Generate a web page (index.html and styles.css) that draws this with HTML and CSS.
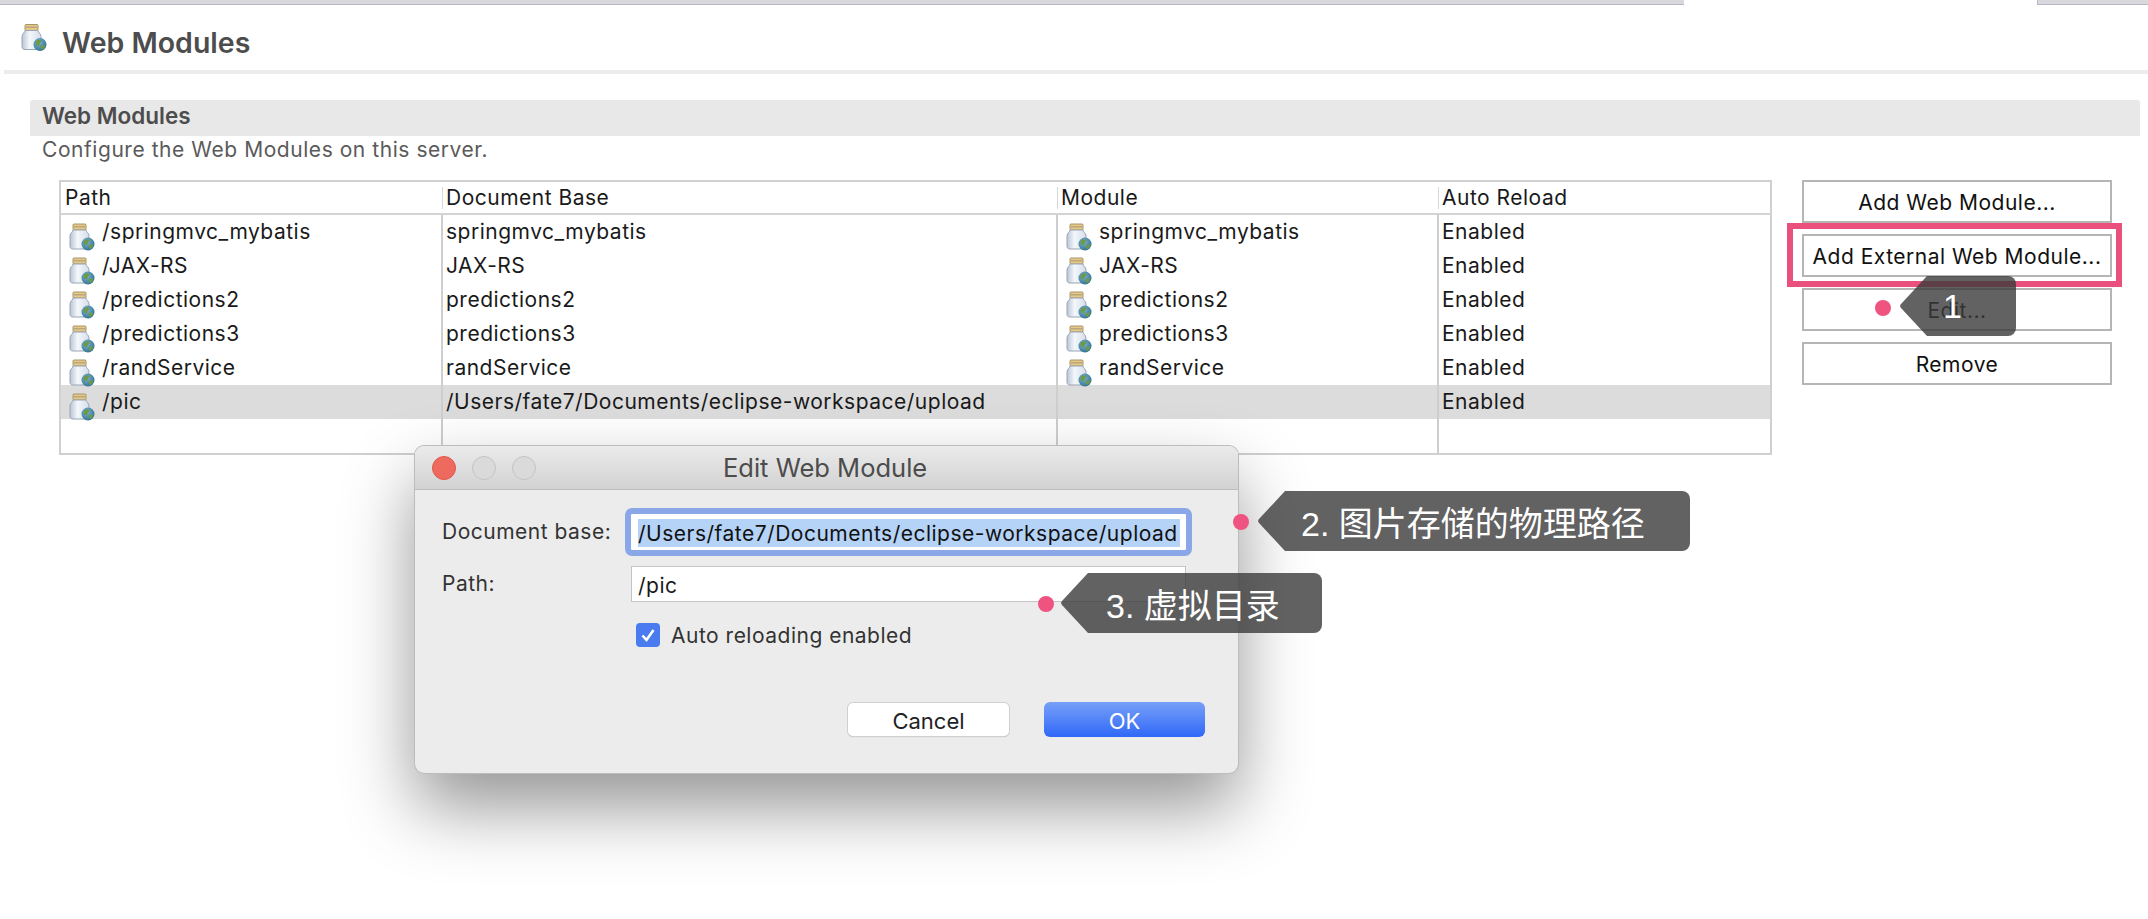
FILE: index.html

```html
<!DOCTYPE html>
<html lang="en">
<head>
    <meta charset="UTF-8">
    <meta name="viewport" content="width=device-width, initial-scale=1.0">
    <title>Web Modules</title>
    <link rel="stylesheet" href="styles.css">
</head>
<body>
    <svg class="defs" width="0" height="0">
        <defs>
            <linearGradient id="jarGlass" x1="0" y1="0" x2="1" y2="0">
                <stop offset="0" stop-color="#b9c6d6"/>
                <stop offset="0.4" stop-color="#f4f7fb"/>
                <stop offset="1" stop-color="#d5deea"/>
            </linearGradient>
            <radialGradient id="jarGlobe" cx="0.4" cy="0.35" r="0.7">
                <stop offset="0" stop-color="#7fb6d8"/>
                <stop offset="1" stop-color="#2f6f8f"/>
            </radialGradient>
            <symbol id="jar" viewBox="0 0 27 28">
                <rect x="5" y="1" width="13" height="6" rx="1" fill="#e6c987" stroke="#a8946a"/>
                <rect x="6" y="3" width="11" height="1.5" fill="#b9a77d"/>
                <path d="M5 7h13c0 2 3 3 3 6v10c0 2-1 3-3 3H5c-2 0-3-1-3-3V13c0-3 3-4 3-6z" fill="url(#jarGlass)" stroke="#9aa6b4"/>
                <circle cx="20" cy="21" r="6.5" fill="url(#jarGlobe)"/>
                <path d="M16.5 17c2-1 4-1 5 0 0 2-2 2-2 4s-3 1-4 0c0-2 0-3 1-4zM21 22c2-1 4-1 4 0 0 2-2 4-3 4-1-1-2-3-1-4z" fill="#6d9a4a"/>
            </symbol>
        </defs>
    </svg>

    <div class="top-tabs">
        <div class="tab-rest"></div>
        <div class="tab-active"></div>
        <div class="tab-rest tab-end"></div>
    </div>

    <header class="page-head">
        <svg class="head-icon"><use href="#jar"/></svg>
        <h1>Web Modules</h1>
    </header>

    <section class="modules">
        <h2>Web Modules</h2>
        <p class="desc">Configure the Web Modules on this server.</p>
        <div class="modules-body">
            <table class="grid">
                <colgroup>
                    <col class="c-path"><col class="c-base"><col class="c-module"><col>
                </colgroup>
                <thead>
                    <tr><th>Path</th><th>Document Base</th><th>Module</th><th>Auto Reload</th></tr>
                </thead>
                <tbody>
                    <tr>
                        <td><svg class="jar"><use href="#jar"/></svg>/springmvc_mybatis</td>
                        <td>springmvc_mybatis</td>
                        <td><svg class="jar"><use href="#jar"/></svg>springmvc_mybatis</td>
                        <td>Enabled</td>
                    </tr>
                    <tr>
                        <td><svg class="jar"><use href="#jar"/></svg>/JAX-RS</td>
                        <td>JAX-RS</td>
                        <td><svg class="jar"><use href="#jar"/></svg>JAX-RS</td>
                        <td>Enabled</td>
                    </tr>
                    <tr>
                        <td><svg class="jar"><use href="#jar"/></svg>/predictions2</td>
                        <td>predictions2</td>
                        <td><svg class="jar"><use href="#jar"/></svg>predictions2</td>
                        <td>Enabled</td>
                    </tr>
                    <tr>
                        <td><svg class="jar"><use href="#jar"/></svg>/predictions3</td>
                        <td>predictions3</td>
                        <td><svg class="jar"><use href="#jar"/></svg>predictions3</td>
                        <td>Enabled</td>
                    </tr>
                    <tr>
                        <td><svg class="jar"><use href="#jar"/></svg>/randService</td>
                        <td>randService</td>
                        <td><svg class="jar"><use href="#jar"/></svg>randService</td>
                        <td>Enabled</td>
                    </tr>
                    <tr class="selected">
                        <td><svg class="jar"><use href="#jar"/></svg>/pic</td>
                        <td>/Users/fate7/Documents/eclipse-workspace/upload</td>
                        <td></td>
                        <td>Enabled</td>
                    </tr>
                    <tr class="empty"><td></td><td></td><td></td><td></td></tr>
                </tbody>
            </table>
            <div class="side-buttons">
                <button type="button">Add Web Module...</button>
                <button type="button">Add External Web Module...</button>
                <button type="button">Edit...</button>
                <button type="button">Remove</button>
            </div>
        </div>
    </section>

    <!-- dialog and annotations sit over the page -->
    <div class="dialog">
        <div class="titlebar">
            <span class="light light-red"></span>
            <span class="light"></span>
            <span class="light"></span>
            <span class="dialog-title">Edit Web Module</span>
        </div>
        <div class="dialog-body">
            <div class="field">
                <label>Document base:</label>
                <div class="input input-focus"><span class="sel">/Users/fate7/Documents/eclipse-workspace/upload</span></div>
            </div>
            <div class="field field-path">
                <label>Path:</label>
                <div class="input">/pic</div>
            </div>
            <div class="check-row">
                <span class="checkbox">
                    <svg width="24" height="24" viewBox="0 0 24 24"><path d="M6.5 12.5l4 4.5 7-10" fill="none" stroke="#fff" stroke-width="2.6"/></svg>
                </span>
                <span>Auto reloading enabled</span>
            </div>
            <div class="dialog-actions">
                <button type="button" class="btn-cancel">Cancel</button>
                <button type="button" class="btn-ok">OK</button>
            </div>
        </div>
    </div>

    <div class="highlight"></div>

    <span class="dot dot-1"></span>
    <div class="callout callout-1">
        <svg class="callout-bg" viewBox="0 0 116 60" preserveAspectRatio="none"><path d="M27 0H108a8 8 0 0 1 8 8V52a8 8 0 0 1-8 8H27L1 32a3 3 0 0 1 0-4z"/></svg>
        <span>1</span>
    </div>

    <span class="dot dot-2"></span>
    <div class="callout callout-2">
        <svg class="callout-bg" viewBox="0 0 432 60" preserveAspectRatio="none"><path d="M27 0H424a8 8 0 0 1 8 8V52a8 8 0 0 1-8 8H27L1 32a3 3 0 0 1 0-4z"/></svg>
        <span>2. 图片存储的物理路径</span>
    </div>

    <span class="dot dot-3"></span>
    <div class="callout callout-3">
        <svg class="callout-bg" viewBox="0 0 261 60" preserveAspectRatio="none"><path d="M27 0H253a8 8 0 0 1 8 8V52a8 8 0 0 1-8 8H27L1 32a3 3 0 0 1 0-4z"/></svg>
        <span>3. 虚拟目录</span>
    </div>
</body>
</html>
```

FILE: styles.css

```css
html, body {
    margin: 0;
    padding: 0;
}
body {
    position: relative;
    height: 919px;
    overflow: hidden;
    background: #fff;
    font-family: Inter, "Liberation Sans", sans-serif;
    color: #222;
}
.defs {
    position: absolute;
}

/* top strip */
.top-tabs {
    display: flex;
    height: 5px;
}
.tab-rest {
    flex: 1;
    background: #d9d9dd;
    border-bottom: 1px solid #b4b8c8;
}
.tab-active {
    width: 353px;
}
.tab-end {
    flex: 0 0 110px;
    border-left: 1px solid #b4b8c8;
}

/* header */
.page-head {
    display: flex;
    align-items: center;
    gap: 15px;
    height: 65px;
    margin-left: 4px;
    padding-left: 16px;
    border-bottom: 4px solid #ececec;
}
.head-icon {
    width: 27px;
    height: 29px;
}
.page-head h1 {
    margin: 10px 0 0;
    font-size: 28.5px;
    font-weight: 600;
    color: #4d4d4d;
}

/* section */
.modules {
    margin: 26px 8px 0 30px;
}
.modules h2 {
    margin: 0;
    height: 36px;
    line-height: 32px;
    padding-left: 12px;
    background: #e8e8e8;
    border-radius: 3px 3px 0 0;
    font-size: 22.5px;
    font-weight: 600;
    color: #4d4d4d;
}
.desc {
    margin: 0;
    height: 44px;
    line-height: 28px;
    padding-left: 12px;
    font-size: 21px;
    letter-spacing: 0.55px;
    color: #5a5a5a;
}
.modules-body {
    display: flex;
    align-items: flex-start;
    gap: 30px;
    padding-left: 29px;
}

/* table */
.grid {
    width: 1713px;
    table-layout: fixed;
    border-collapse: collapse;
    border: 2px solid #d0d0d0;
    font-size: 21px;
    letter-spacing: 0.5px;
    line-height: 28px;
    color: #1a1a1a;
}
.c-path { width: 382px; }
.c-base { width: 615px; }
.c-module { width: 381px; }
.grid th {
    height: 31px;
    padding: 0 0 0 4px;
    text-align: left;
    font-weight: normal;
    border-bottom: 2px solid #d4d4d4;
    background: linear-gradient(#d8d8d8, #d8d8d8) left center / 1px 22px no-repeat;
}
.grid th:first-child {
    background: none;
}
.grid td {
    height: 34px;
    padding: 0 0 0 3px;
    border-left: 2px solid #cecece;
    white-space: nowrap;
}
.grid td:first-child {
    border-left: 0;
}
.grid .selected td {
    background: #dcdcdc;
}
.grid .empty td {
    height: 34px;
}
.jar {
    width: 27px;
    height: 28px;
    margin: -4px 7px -4px 4px;
    vertical-align: -8px;
}

/* side buttons */
.side-buttons {
    display: flex;
    flex-direction: column;
    gap: 11px;
    width: 310px;
}
.side-buttons button {
    height: 43px;
    padding: 1px 0 0;
    background: #fff;
    border: 2px solid #b5b5b5;
    font-family: inherit;
    font-size: 21px;
    letter-spacing: 0.5px;
    color: #111;
}

/* dialog */
.dialog {
    position: absolute;
    left: 415px;
    top: 446px;
    width: 823px;
    height: 327px;
    border-radius: 9px;
    background: #ececec;
    box-shadow: 0 0 0 1px #bcbcbc, 0 34px 70px rgba(0, 0, 0, 0.42);
    overflow: hidden;
    box-sizing: border-box;
}
.titlebar {
    display: flex;
    align-items: center;
    gap: 16px;
    position: relative;
    height: 44px;
    padding-left: 17px;
    box-sizing: border-box;
    background: linear-gradient(#ebebeb, #d2d2d2);
    border-bottom: 1px solid #bdbdbd;
}
.light {
    width: 24px;
    height: 24px;
    border-radius: 50%;
    box-sizing: border-box;
    background: #dadada;
    border: 1px solid #c4c4c4;
}
.light-red {
    background: #ee6a5e;
    border-color: #e0574b;
}
.dialog-title {
    position: absolute;
    left: 308px;
    font-size: 25.5px;
    color: #4c4c4c;
}
.dialog-body {
    position: relative;
    padding: 17px 0 0 27px;
    font-size: 21px;
    letter-spacing: 0.5px;
    color: #333;
}
.field {
    display: flex;
    align-items: center;
    height: 50px;
}
.field label {
    width: 189px;
    padding-bottom: 2px;
}
.field-path {
    height: 36px;
    margin-top: 9px;
}
.input {
    width: 555px;
    height: 36px;
    line-height: 37px;
    padding-left: 6px;
    box-sizing: border-box;
    background: #fff;
    border: 1px solid #c5c5c5;
    color: #1a1a1a;
}
.input-focus {
    line-height: 30px;
    padding-top: 4px;
    outline: 6px solid #8aa8e8;
    border-radius: 1px;
    border-color: #fff;
    white-space: nowrap;
}
.sel {
    display: inline-block;
    height: 28px;
    width: 542px;
    background: #b5d2f7;
    color: #111;
    overflow: hidden;
}
.check-row {
    display: flex;
    align-items: center;
    gap: 11px;
    margin: 21px 0 0 194px;
    height: 24px;
}
.checkbox {
    display: block;
    width: 24px;
    height: 24px;
    border-radius: 4px;
    background: #4a7cf0;
}
.dialog-actions {
    display: flex;
    justify-content: flex-end;
    align-items: center;
    gap: 35px;
    margin: 55px 33px 0 0;
}
.dialog-actions button {
    width: 161px;
    font-family: inherit;
    font-size: 22px;
    border: 0;
    padding: 2px 0 0;
}
.btn-cancel {
    height: 33px;
    background: #fff;
    color: #222;
    border-radius: 5px;
    box-shadow: 0 0 0 1px #d0d0d0, 0 1px 1px rgba(0, 0, 0, 0.3);
}
.btn-ok {
    height: 35px;
    color: #fff;
    border-radius: 6px;
    background: linear-gradient(#78a0f8, #2f68f8);
}

/* annotations */
.highlight {
    position: absolute;
    left: 1787px;
    top: 223px;
    width: 335px;
    height: 64px;
    box-sizing: border-box;
    border: 6px solid #e9507c;
}
.dot {
    position: absolute;
    width: 16px;
    height: 16px;
    border-radius: 50%;
    background: #ef5480;
}
.dot-1 { left: 1875px; top: 300px; }
.dot-2 { left: 1233px; top: 514px; }
.dot-3 { left: 1038px; top: 596px; }
.callout {
    position: absolute;
    height: 60px;
    display: flex;
    align-items: center;
    color: #fff;
    font-family: "Liberation Sans", "Noto Sans CJK SC", sans-serif;
    font-size: 34px;
}
.callout-bg {
    position: absolute;
    left: 0;
    top: 0;
    width: 100%;
    height: 100%;
    fill: rgba(59, 59, 59, 0.8);
}
.callout span {
    position: relative;
}
.callout-1 { left: 1900px; top: 276px; width: 116px; padding-left: 43px; box-sizing: border-box; }
.callout-2 { left: 1258px; top: 491px; width: 432px; padding-left: 43px; box-sizing: border-box; }
.callout-3 { left: 1061px; top: 573px; width: 261px; padding-left: 45px; box-sizing: border-box; }
```
